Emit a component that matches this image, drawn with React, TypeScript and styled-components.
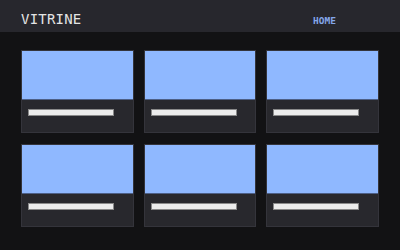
import React from 'react';
import styled, { createGlobalStyle } from 'styled-components';

const GlobalStyle = createGlobalStyle`
  html, body {
    margin: 0;
    padding: 0;
    background: #121214;
  }
  body {
    font-family: "DejaVu Sans Mono", "Liberation Mono", monospace;
  }
`;

const items = [1, 2, 3, 4, 5, 6];

const App: React.FC = () => {
  return (
    <>
      <GlobalStyle />
      <Page>
        <Header>
          <Brand>VITRINE</Brand>
          <Nav>
            <NavLink href="#">HOME</NavLink>
          </Nav>
        </Header>
        <Grid>
          {items.map((id) => (
            <Card key={id}>
              <Thumb />
              <CardBody>
                <Caption />
              </CardBody>
            </Card>
          ))}
        </Grid>
      </Page>
    </>
  );
};

const Page = styled.div`
  width: 400px;
  height: 250px;
  background: #121214;
  overflow: hidden;
`;

const Header = styled.header`
  height: 32px;
  display: flex;
  align-items: center;
  justify-content: space-between;
  padding: 0 21px;
  background: #27272d;
  box-sizing: border-box;
`;

const Brand = styled.div`
  color: #e4e4e4;
  font-size: 14px;
  letter-spacing: 0.2px;
  padding-top: 6px;
`;

const Nav = styled.nav`
  display: flex;
  padding: 9px 43px 0 0;
`;

const NavLink = styled.a`
  color: #84a6ea;
  font-size: 9.5px;
  font-weight: bold;
  text-decoration: none;
`;

const Grid = styled.main`
  display: grid;
  grid-template-columns: repeat(3, 1fr);
  column-gap: 10px;
  row-gap: 11px;
  padding: 18px 21px;
`;

const Card = styled.div`
  height: 83px;
  display: flex;
  flex-direction: column;
  background: #28282d;
  border: 1px solid #34343b;
  box-sizing: border-box;
`;

const Thumb = styled.div`
  height: 49px;
  background: #8fb8ff;
  border-bottom: 1px solid #4d5f86;
  box-sizing: border-box;
`;

const CardBody = styled.div`
  flex: 1;
  padding: 9px 6px 0;
`;

const Caption = styled.div`
  width: 86px;
  height: 7px;
  background: #ececec;
  border: 1px solid #8a8a8a;
  box-sizing: border-box;
`;

export default App;
